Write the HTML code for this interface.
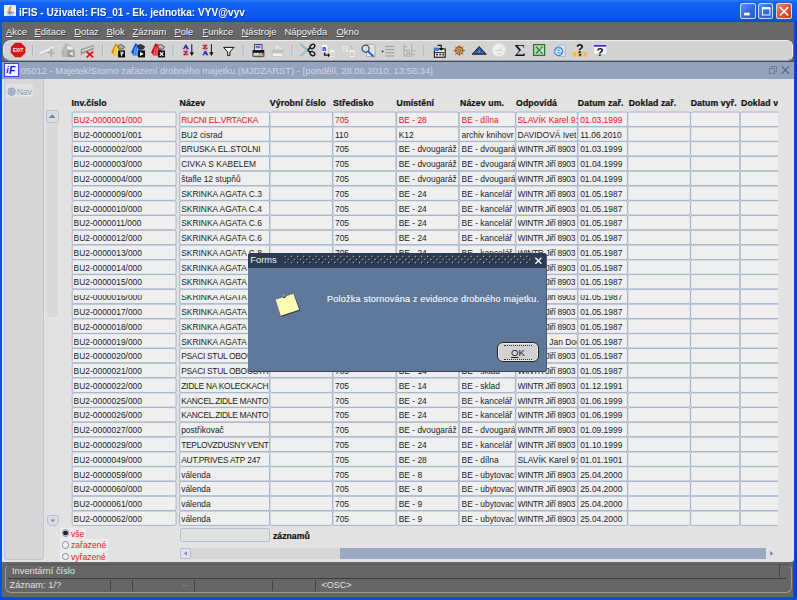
<!DOCTYPE html>
<html lang="cs">
<head>
<meta charset="utf-8">
<title>iFIS</title>
<style>
*{box-sizing:border-box;margin:0;padding:0}
html,body{width:797px;height:600px;overflow:hidden;background:#0a50d8;font-family:"Liberation Sans",sans-serif}
#app{position:absolute;left:0;top:0;width:797px;height:600px;overflow:hidden;background:#0a4fd6}
.abs{position:absolute}
/* XP title bar */
#tbar{left:0;top:0;width:797px;height:21.6px;background:linear-gradient(to bottom,#2f7cf6 0,#1263f2 2.5px,#0f5ef0 9px,#0d5aec 15px,#0c54e2 19px,#0a4cd4 21.6px)}
#ttext{left:19.4px;top:4.9px;color:#fff;font-weight:bold;font-size:11.7px;white-space:nowrap;text-shadow:0.7px 0.7px 0 #123a8a;transform:scaleX(0.864);transform-origin:0 0}
#ticon{left:4px;top:4.7px;width:12px;height:11.8px;background:#ededeb;border-radius:0.6px}
.wb{top:3.4px;width:15.3px;height:15.6px;border:0.8px solid rgba(240,244,255,.8);border-radius:2.5px;background:linear-gradient(135deg,#5f92f6,#3368e2 55%,#2a5cd6)}
#wclose{background:linear-gradient(135deg,#f08c6c,#de5432 50%,#c8401e)}
/* menu */
#menu{left:2px;top:21.5px;width:791.5px;height:19.5px;background:#676767}
.mi{top:25.8px;color:#f4f4f4;font-size:9.4px;white-space:nowrap;text-shadow:0.6px 0.6px 0 #333}
.mi u{text-decoration:underline;text-underline-offset:1px}
/* toolbar */
#tool{left:2px;top:40.4px;width:792px;height:21px;background:#676767}
#toolin{left:0.6px;top:0;width:790.6px;height:20.4px;background:#d3d3d3;border-radius:8px 6px 6px 8px;border:0.7px solid #ececec;border-bottom:0.8px solid #a4a4a4}
/* mdi window */
#mdit{left:2px;top:61px;width:791.5px;height:18px;background:#93a2bd;border-top:0.8px solid #3e4a66}
#mditext{left:20.8px;top:65.4px;color:#cfd6e4;font-size:9.42px;white-space:nowrap}
#mdiicon{left:4.3px;top:62.8px;width:14.3px;height:14.2px;background:#f4f4f8;border:1.1px solid #3c3cf0;font-size:9.6px;font-weight:bold;font-style:italic;color:#1212e0;line-height:11.6px;letter-spacing:-1.4px;padding-left:1.4px;overflow:hidden;font-family:'Liberation Sans',sans-serif}
#content{left:2px;top:78.5px;width:791.5px;height:483.5px;background:#e2e2e2;border-radius:0 0 3px 0}
#side{left:4.2px;top:78.5px;width:39.6px;height:481px;background:#d6d6d6;border:0.8px solid #c2c8d2;border-top:none;border-radius:0 0 3px 3px}
#navtab{left:6px;top:84.4px;width:27px;height:13.6px;background:#e0e0e0}
#navtxt{left:17px;top:86.5px;font-size:8.4px;color:#8a9ab4;text-shadow:0.6px 0.6px 0 #f4f4f4}
.h{position:absolute;top:98px;font-size:8.7px;font-weight:bold;color:#111;-webkit-text-stroke:0.22px #111;white-space:nowrap;letter-spacing:0.12px}
#grid{left:0;top:0;width:777.5px;height:600px;overflow:hidden}
.r{position:absolute;left:0;height:14.7px;width:800px}
.c{position:absolute;top:0;height:14.7px;font-size:8.43px;line-height:17.8px;white-space:nowrap;overflow:hidden;color:#1c1c1c}
.red .c{color:#f00c16}
.g{position:absolute;left:0;right:0;top:4.2px;height:1.5px;background:#efefef}
/* scroll */
#vtrack{left:47.2px;top:123px;width:10.4px;height:193.5px;background:#d9d9d9}
.sbtn{width:11.5px;height:11.5px;border:0.8px solid #b4c0d4;border-radius:2.5px;background:#dadce1}
/* bottom widgets */
.rlab{position:absolute;left:60px;font-size:8.6px;color:#f0141e;background:#ececec;height:11.6px;line-height:12.4px;padding:0 1.5px 0 11px;white-space:nowrap}
.rad{position:absolute;z-index:2;left:61.5px;width:7.5px;height:7.5px;border-radius:50%;border:0.8px solid #7a8aa6;background:#f4f4f4}
#cnt{left:179.7px;top:528.2px;width:90px;height:14px;border:0.9px solid #b2bfd2;border-radius:2.2px;background:#e0e0e0}
#zaz{left:273px;top:531px;font-size:8.7px;font-weight:bold;color:#111;-webkit-text-stroke:0.22px #111}
#hs{left:179.5px;top:547.8px;width:598px;height:10.9px;background:#d6d6d6}
#hsthumb{left:339.5px;top:547.8px;width:427px;height:10.9px;background:#9aa8c1}
/* status */
#status{left:2px;top:562px;width:791px;height:35px;background:#666}
#stin{left:5px;top:563.5px;width:787px;height:29px;border:0.8px solid #9a9a9a;border-radius:6px;border-top-color:#555}
#stline{left:8px;top:577.5px;width:778px;height:0.9px;background:#3c3c3c}
.st{position:absolute;color:#e2e2e2;font-size:9.3px;white-space:nowrap}
.ss{position:absolute;top:579.5px;width:1.2px;height:11px;background:#7a869c;border-left:0.5px solid #444}
/* dialog */
#dlg{left:248.3px;top:252.5px;width:298.7px;height:119.2px;background:#5f7799;border-radius:2.5px;border-bottom:1px solid #36435c;border-right:0.7px solid #465a78;overflow:hidden}
#dlgt{left:0;top:0;width:300px;height:15px;background:#2d3a52}
#dlgdots{left:34px;top:2px;width:249px;height:11px;background-image:radial-gradient(circle at 1px 1px,#6c7a94 0.65px,transparent 0.95px),radial-gradient(circle at 1px 1px,#6c7a94 0.65px,transparent 0.95px);background-size:3.9px 3.9px,3.9px 3.9px;background-position:0 0,1.95px 1.95px;opacity:.9}
#dlgname{left:2px;top:2.9px;color:#f2f4f8;font-size:9.3px}
#dlgmsg{left:78.8px;top:41.5px;color:#e2e7f0;text-shadow:0 0 0.5px #dfe5ee;font-size:9.1px;white-space:nowrap;letter-spacing:0.18px}
#ok{left:248.9px;top:89.8px;width:41.6px;height:20.2px;background:#d2d2d2;border:1px solid #262626;border-radius:6px;box-shadow:inset 0 0 0 0.8px #f2f2f2}
#oktxt{left:0;top:3.7px;width:39.6px;text-align:center;font-size:9.6px;color:#222}
.okd{left:5.5px;width:28px;height:0;border-top:0.8px dotted #333}
</style>
</head>
<body>
<div id="app">
<div id="tbar" class="abs"></div>
<div id="ticon" class="abs"></div>
<svg class="abs" style="left:4px;top:4.7px" width="12" height="12" viewBox="0 0 12 12"><path d="M6.8 1.8C4.6 3.4 7.8 4 5.2 6" stroke="#e8762a" stroke-width="1.5" fill="none" stroke-linecap="round"/><path d="M5 2.6C4 3.8 5.6 4.4 4.4 5.6" stroke="#f0a060" stroke-width="0.9" fill="none"/><path d="M3.2 6.6h5.6c0 1.8-1 2.8-2.8 2.8s-2.8-1-2.8-2.8z" fill="#7a92b4"/><path d="M8.8 7c1.6 0 1.4 1.8-0.2 1.8" stroke="#5a7298" stroke-width="0.6" fill="none"/><path d="M2.8 10.2h6.6" stroke="#9aa8bc" stroke-width="0.7"/></svg>
<div id="ttext" class="abs">iFIS - Uživatel: FIS_01 - Ek. jednotka: VYV@vyv</div>
<div id="wmin" class="abs wb" style="left:740.3px"></div>
<div id="wmax" class="abs wb" style="left:758.2px"></div>
<div id="wclose" class="abs wb" style="left:776.3px"></div>
<svg class="abs" style="left:740px;top:0" width="54" height="22" viewBox="740 0 54 22">
 <rect x="743.9" y="12.7" width="5.8" height="2.7" fill="#fff"/>
 <rect x="762.5" y="8" width="7.4" height="7" fill="none" stroke="#fff" stroke-width="1"/><rect x="762" y="7.2" width="8.4" height="2.1" fill="#fff"/>
 <path d="M780.4 7.6 L787.7 15 M787.7 7.6 L780.4 15" stroke="#fff" stroke-width="1.6" stroke-linecap="round"/>
</svg>

<div id="menu" class="abs"></div>
<div class="abs mi" style="left:6px"><u>A</u>kce</div>
<div class="abs mi" style="left:34.5px"><u>E</u>ditace</div>
<div class="abs mi" style="left:74.3px"><u>D</u>otaz</div>
<div class="abs mi" style="left:106.5px"><u>B</u>lok</div>
<div class="abs mi" style="left:132.5px"><u>Z</u>áznam</div>
<div class="abs mi" style="left:174.5px"><u>P</u>ole</div>
<div class="abs mi" style="left:202.5px"><u>F</u>unkce</div>
<div class="abs mi" style="left:241.5px"><u>N</u>ástroje</div>
<div class="abs mi" style="left:284.5px">Náp<u>o</u>věda</div>
<div class="abs mi" style="left:336.5px"><u>O</u>kno</div>

<div id="tool" class="abs"><div id="toolin" class="abs"></div></div>
<svg class="abs" style="left:0;top:40px" width="797" height="22" viewBox="0 40 797 22" font-family="Liberation Sans, sans-serif">
 <!-- separators -->
 <g stroke="#9aaac6" stroke-width="1.1">
  <path d="M32.8 45V55M102.8 45V55M173.2 45V55M243.3 45V55M292.2 45V55M424 45V55"/>
 </g>
 <g stroke="#eef1f6" stroke-width="0.6">
  <path d="M33.6 45V55M103.6 45V55M174 45V55M244.1 45V55M293 45V55M424.8 45V55"/>
 </g>
 <!-- 1 exit -->
 <polygon points="15.2,43.1 21,43.1 25.1,47.1 25.1,52.9 21,56.9 15.2,56.9 11.1,52.9 11.1,47.1" fill="#d9141f" stroke="#c00c18" stroke-width="0.5"/>
 <text x="18.1" y="51.8" font-size="4.9" font-weight="bold" fill="#fff" text-anchor="middle" textLength="10.4" lengthAdjust="spacingAndGlyphs">EXIT</text>
 <!-- 2 insert record (disabled) -->
 <g>
  <polygon points="40,52.6 53.4,46 53.4,49 40,54.4" fill="#f0f0f0"/>
  <polygon points="40,54.4 53.4,49 53.4,50 40,55.3" fill="#b9b9b9"/>
  <path d="M51.2 48.6V57M47.8 52.8H54.6" stroke="#b2b2b2" stroke-width="1.7"/>
 </g>
 <!-- 3 disabled house/doc -->
 <g>
  <polygon points="66,43 73,47.4 74.4,50 74.4,57 62.6,57 61.2,52.5 63.5,46.5" fill="#b7b7b7"/>
  <polygon points="67.3,45.8 72.8,47.6 72.8,49.6 67.3,49.6" fill="#eeeeee"/>
  <rect x="67.6" y="50.2" width="7" height="6.9" fill="#9a9a9a"/>
  <polygon points="72.8,51.5 72.8,55.8 69.2,53.6" fill="#f2f2f2"/>
 </g>
 <!-- 4 delete record -->
 <g>
  <polygon points="81,49 93.9,44.8 93.9,49.4 81,54.6" fill="#9c9c9c"/>
  <polygon points="81.6,50.4 93.3,46.4 93.3,47.6 81.6,51.8" fill="#ececec"/>
  <path d="M81.3 49V55.2" stroke="#8a8a8a" stroke-width="0.8"/>
  <path d="M86.6 51.6L93.2 57.4M93.2 51.6L86.6 57.4" stroke="#e8101c" stroke-width="1.9"/>
 </g>
 <!-- 5-7 folders -->
 <g>
  <polygon points="111.2,52.6 115.4,43.6 118.6,44.6 121.2,47.6 121.0,55.8 113.4,55.4" fill="#f4c22e"/>
  <polygon points="111.2,52.6 115.4,43.6 116.8,44 113.2,53.4" fill="#d88a10"/>
  <path d="M115.4 47.2L114.2 54.4M117.6 48.4L116.6 55" stroke="#fbe27a" stroke-width="0.9"/>
  <polygon points="117.6,46 120.6,44.4 124.6,46.6 123.4,49 119.4,49" fill="#a8a8a8" stroke="#4a4a4a" stroke-width="0.8"/>
  <rect x="118.1" y="50.4" width="6.9" height="7" fill="#0c0c0c"/>
  <path d="M120.2 52.2h2.8v1.7h-2.6M121.6 53.6v2.6" stroke="#fff" stroke-width="1" fill="none"/>
 </g>
 <g>
  <polygon points="131.2,52.6 135.4,43.6 138.6,44.6 141.2,47.6 141.0,55.8 133.4,55.4" fill="#2c7ef4"/>
  <polygon points="131.2,52.6 135.4,43.6 136.8,44 133.2,53.4" fill="#1244cc"/>
  <path d="M135.4 47.2L134.2 54.4M137.6 48.4L136.6 55" stroke="#7ab8ff" stroke-width="0.9"/>
  <polygon points="137.6,46 140.6,44.4 144.6,46.6 143.4,49 139.4,49" fill="#3a3a3a" stroke="#111" stroke-width="0.8"/>
  <rect x="138.1" y="50.4" width="6.9" height="7" fill="#0c0c0c"/>
  <polygon points="140.0,51.8 143.8,53.9 140.0,56" fill="#fff"/>
 </g>
 <g>
  <polygon points="151.2,52.6 155.4,43.6 158.6,44.6 161.2,47.6 161.0,55.8 153.4,55.4" fill="#ec2630"/>
  <polygon points="151.2,52.6 155.4,43.6 156.8,44 153.2,53.4" fill="#b80c18"/>
  <path d="M155.4 47.2L154.2 54.4M157.6 48.4L156.6 55" stroke="#ff8088" stroke-width="0.9"/>
  <polygon points="157.6,46 160.6,44.4 164.6,46.6 163.4,49 159.4,49" fill="#b4b4b4" stroke="#4a4a4a" stroke-width="0.8"/>
  <rect x="158.1" y="50.4" width="6.9" height="7" fill="#0c0c0c"/>
  <path d="M159.8 52.2L163.4 55.8M163.4 52.2L159.8 55.8" stroke="#fff" stroke-width="1.2"/>
 </g>
 <!-- 8 sort AZ -->
 <g font-weight="bold" font-size="6.4" font-family="Liberation Serif, serif" stroke-width="0.35">
  <text x="183" y="49" fill="#1a1cb0" stroke="#1a1cb0" textLength="5.6" lengthAdjust="spacingAndGlyphs">A</text>
  <text x="183.2" y="55.4" fill="#b8141e" stroke="#b8141e" textLength="5.2" lengthAdjust="spacingAndGlyphs">Z</text>
  <path d="M191.8 44.2V54" stroke="#111" stroke-width="1"/>
  <polygon points="189.6,52.2 194,52.2 191.8,56" fill="#111" stroke="none"/>
 </g>
 <!-- 9 sort ZA -->
 <g font-weight="bold" font-size="6.4" font-family="Liberation Serif, serif" stroke-width="0.35">
  <text x="202.6" y="49" fill="#b8141e" stroke="#b8141e" textLength="5.2" lengthAdjust="spacingAndGlyphs">Z</text>
  <text x="202.4" y="55.4" fill="#1a1cb0" stroke="#1a1cb0" textLength="5.6" lengthAdjust="spacingAndGlyphs">A</text>
  <path d="M211.4 44.2V54" stroke="#111" stroke-width="1"/>
  <polygon points="209.2,52.2 213.6,52.2 211.4,56" fill="#111" stroke="none"/>
 </g>
 <!-- 10 funnel -->
 <polygon points="223.6,47.4 234,47.4 229.9,52 229.9,55.6 227.7,55.6 227.7,52" fill="#f4f4f4" stroke="#111" stroke-width="1"/>
 <!-- 11 printer -->
 <g>
  <rect x="254.4" y="44.6" width="7.6" height="5.8" fill="#f4f6fc" stroke="#222" stroke-width="0.8"/>
  <path d="M255.6 46.2h5M255.6 47.8h5" stroke="#2a3ad0" stroke-width="1"/>
  <rect x="252.6" y="50" width="11.6" height="2.6" fill="#1a1a1a"/>
  <rect x="252.9" y="52.4" width="11" height="3.8" fill="#dcdcdc" stroke="#1a1a1a" stroke-width="0.8"/>
  <rect x="258.8" y="53.2" width="1.6" height="1.5" fill="#20b030"/>
  <rect x="260.4" y="53.2" width="1.4" height="1.5" fill="#f0c020"/>
  <rect x="261.8" y="53.2" width="1.5" height="1.5" fill="#e02020"/>
  <path d="M254 56.8h9" stroke="#555" stroke-width="0.7"/>
 </g>
 <!-- 12 disabled fax/printer -->
 <g>
  <polygon points="274,49 276.5,44.6 282.4,45.4 282.4,50" fill="#eeeeee" stroke="#c0c0c0" stroke-width="0.6"/>
  <path d="M276.6 47.8l4.4-2.2M277.6 49l4.4-2.2" stroke="#c4c4c4" stroke-width="0.7"/>
  <rect x="271.8" y="49.6" width="11.4" height="3.6" fill="#c2c2c2"/>
  <rect x="272.2" y="53" width="10.6" height="3.4" fill="#efefef" stroke="#bdbdbd" stroke-width="0.6"/>
 </g>
 <!-- 13 scissors -->
 <g>
  <path d="M300.6 43.8L310.2 52.6" stroke="#5aa0a8" stroke-width="1.7"/>
  <path d="M300.6 56L310.2 47.4" stroke="#6cb0b6" stroke-width="1.7"/>
  <path d="M300.9 43.9L308 50.4M300.9 55.9L308 49.4" stroke="#e8f4f4" stroke-width="0.6"/>
  <ellipse cx="312.4" cy="46.4" rx="2.6" ry="1.9" fill="none" stroke="#111" stroke-width="1.3" transform="rotate(-35 312.4 46.4)"/>
  <ellipse cx="312.4" cy="53.6" rx="2.6" ry="1.9" fill="none" stroke="#111" stroke-width="1.3" transform="rotate(35 312.4 53.6)"/>
  <path d="M307.6 50L310.6 47.6M307.6 50L310.6 52.4" stroke="#111" stroke-width="1.3"/>
 </g>
 <!-- 14 copy -->
 <g>
  <polygon points="321.4,44 326,44 328,46 328,52.8 321.4,52.8" fill="#f8f8ff" stroke="#b8b8c8" stroke-width="0.6"/>
  <text x="322" y="51.4" font-size="7.6" font-weight="bold" fill="#2030e0">a</text>
  <path d="M324.6 52.6V55.2H328.6" stroke="#111" stroke-width="1.3" fill="none"/>
  <polygon points="328,53.2 330.6,55.2 328,57.2" fill="#111"/>
  <rect x="329.8" y="49.8" width="4.6" height="7" fill="#f2f2f2"/>
  <text x="330.2" y="56.4" font-size="6.6" fill="#c8c8c8" font-weight="bold">a</text>
 </g>
 <!-- 15 paste disabled -->
 <g>
  <rect x="342" y="45.4" width="6.4" height="6.8" fill="#f0f0f0" stroke="#c4c4c4" stroke-width="0.6"/>
  <path d="M343.2 47.4h4M343.2 49h4M343.2 50.6h3" stroke="#bcbcbc" stroke-width="0.7"/>
  <path d="M349.4 46.4h2.6v3" stroke="#b4b4b4" stroke-width="1" fill="none"/>
  <rect x="349.6" y="50" width="5" height="7" fill="#efefef"/>
  <text x="350" y="56.4" font-size="6.6" fill="#c2c2c2" font-weight="bold">a</text>
 </g>
 <!-- 16 magnifier -->
 <g>
  <polygon points="366.6,44.4 373,44.4 375,46.4 375,56.6 366.6,56.6" fill="#ececec" stroke="#9a9a9a" stroke-width="0.7"/>
  <path d="M369 47h4.6M369 49h4.6M369 51h4.6" stroke="#c8c8c8" stroke-width="0.6"/>
  <circle cx="365.6" cy="48.6" r="3.5" fill="#cfe4f4" fill-opacity="0.8" stroke="#444a58" stroke-width="1.3"/>
  <path d="M368 51.2L373.6 56.6" stroke="#1a62e0" stroke-width="2"/>
 </g>
 <!-- 17 list -->
 <g>
  <polygon points="381.8,50.2 384,51.4 381.8,52.6" fill="#222"/>
  <path d="M385.4 46.4h8.8M385.4 49.6h8.8M385.4 52.8h8.8M385.4 56h8.8" stroke="#959595" stroke-width="0.95"/>
 </g>
 <!-- 18 tree disabled -->
 <g stroke="#a6a6a6" stroke-width="0.85" fill="none">
  <path d="M404 44V57M411.6 44V57"/>
  <path d="M404 46.6h3.4M404 50.4h3M407 50.4h2.6v3h-2.6zM404 55h3M407 53.6h2.6v3h-2.6zM411.6 50.8h3.6M411.6 54.6h3.6"/>
 </g>
 <!-- 19 calendar/table with arrow -->
 <g>
  <rect x="434.4" y="49" width="10.8" height="8.2" fill="#f4f4f6" stroke="#111" stroke-width="1.1"/>
  <rect x="434" y="47.6" width="4.6" height="3.4" fill="#3a78e8"/>
  <path d="M435 52.6h9.6" stroke="#111" stroke-width="0.9"/>
  <rect x="436" y="53.8" width="2" height="1.6" fill="#222"/><rect x="439.2" y="53.8" width="2" height="1.6" fill="#222"/><rect x="442.2" y="53.8" width="1.8" height="1.6" fill="#222"/>
  <path d="M437.6 45.4h3.6v3" stroke="#111" stroke-width="1.1" fill="none"/>
  <polygon points="439,48 443.4,48 441.2,51" fill="#111"/>
 </g>
 <!-- 20 ship wheel -->
 <g stroke="#a85e10" fill="none">
  <circle cx="459.2" cy="50.6" r="3.6" stroke-width="1.3"/>
  <path d="M453.4 50.6H465M459.2 45V56.2M455.2 46.6L463.2 54.6M463.2 46.6L455.2 54.6" stroke-width="1"/>
  <circle cx="459.2" cy="50.6" r="1.1" fill="#e8b060" stroke-width="0.6"/>
 </g>
 <!-- 21 eye triangle -->
 <g>
  <path d="M474.4 47.6L472.8 46.2M484.2 47.6L485.8 46.2M476.6 46L475.8 44.8M482 46L482.8 44.8" stroke="#e8c820" stroke-width="0.9"/>
  <polygon points="479.2,46.6 486.2,54.2 472.2,54.2" fill="#5a5a5a" stroke="#1a1a1a" stroke-width="1"/>
  <circle cx="479.3" cy="51.4" r="2.5" fill="#0c54fa"/>
  <circle cx="479.3" cy="51.6" r="1" fill="#5cc0ff"/>
 </g>
 <!-- 22 clock disabled -->
 <g>
  <circle cx="499" cy="50" r="6.4" fill="#f0f0f0" stroke="#e2e2e2" stroke-width="0.6"/>
  <path d="M499 50L503 46.2M495 50.6H503M497 53.8h4" stroke="#c8c8c8" stroke-width="0.8"/>
 </g>
 <!-- 23 sigma -->
 <text x="514.3" y="56" font-size="16.4" font-family="Liberation Serif, serif" fill="#111" textLength="11.4" lengthAdjust="spacingAndGlyphs">Σ</text>
 <!-- 24 excel -->
 <g>
  <rect x="533.6" y="44.6" width="11" height="10.8" fill="#c6d2c6" stroke="#2a7a2e" stroke-width="1.3"/>
  <path d="M536 46.8L542.4 53.4M542.4 46.8L536 53.4" stroke="#1e8a2a" stroke-width="1.5"/>
  <path d="M539.4 49h4.4M539.4 51.4h4.4" stroke="#e8f0e8" stroke-width="0.6"/>
 </g>
 <!-- 25 ie + doc -->
 <g>
  <polygon points="558.6,44.6 563.6,44.6 565.4,46.4 565.4,56.4 558.6,56.4" fill="#e4e8f4" stroke="#98a8cc" stroke-width="0.7"/>
  <circle cx="558.6" cy="51.4" r="4.3" fill="#5aa0ec" stroke="#2a68c8" stroke-width="0.8"/>
  <path d="M556 51.6h5.4a2.7 2.7 0 1 0 -0.7 1.9" stroke="#e8f2ff" stroke-width="1.1" fill="none"/>
  <path d="M553.6 54.2C555 49 560 45.4 564 46" stroke="#9ccaf8" stroke-width="0.8" fill="none"/>
 </g>
 <!-- 26 help users -->
 <g>
  <rect x="572.8" y="51.6" width="3.6" height="5" fill="#f2b860"/><rect x="573.4" y="50.4" width="2.2" height="1.6" fill="#f8d8a0"/>
  <rect x="577.8" y="51.6" width="4.4" height="5" fill="#f0a848"/>
  <rect x="583.4" y="51.6" width="3.6" height="5" fill="#f2b860"/><rect x="584" y="50.4" width="2.2" height="1.6" fill="#f8d8a0"/>
  <text x="576" y="53" font-size="12.4" font-weight="bold" fill="#111">?</text>
  <rect x="579.2" y="54" width="1.7" height="1.7" fill="#111"/>
 </g>
 <!-- 27 window help -->
 <g>
  <rect x="594" y="45.4" width="12.2" height="8.6" fill="#f6f6f6" stroke="#d8d8d8" stroke-width="0.5"/>
  <rect x="594" y="45" width="12.2" height="1.7" fill="#4a24d8"/>
  <text x="596.6" y="56.4" font-size="11.6" font-weight="bold" fill="#111">?</text>
 </g>
</svg>


<div id="mdit" class="abs"></div>
<div id="mdiicon" class="abs"></div>
<svg class="abs" style="left:4.3px;top:62.8px" width="15" height="15" viewBox="0 0 15 15" font-family="Liberation Sans, sans-serif" font-weight="bold" font-style="italic" fill="#1414e2"><text x="2.3" y="10" font-size="9">i</text><text x="4.9" y="11.3" font-size="10.4">F</text></svg>
<div id="mditext" class="abs">05012 - Majetek/Storno zařazení drobného majetku (MJDZARST) - [pondělí, 28.06.2010, 13:58:34]</div>
<svg class="abs" style="left:768px;top:64px" width="24" height="12" viewBox="0 0 24 12">
 <rect x="3.2" y="2.6" width="5.4" height="4.6" fill="none" stroke="#6c7a94" stroke-width="0.9"/>
 <rect x="1.2" y="4.8" width="5.4" height="4.6" fill="#93a2bd" stroke="#6c7a94" stroke-width="0.9"/>
 <path d="M13.8 2.4 L21 9.8 M21 2.4 L13.8 9.8" stroke="#5d6b86" stroke-width="1.3"/>
</svg>

<div id="content" class="abs"></div>
<div id="side" class="abs"></div>
<div id="navtab" class="abs"></div>
<svg class="abs" style="left:7px;top:87px" width="10" height="10" viewBox="0 0 10 10"><circle cx="4.6" cy="4.6" r="3.7" fill="#b8c2d4" stroke="#8d9db8" stroke-width="0.8"/><path d="M1 4.6H8.2M4.6 1V8.2M2 2L7.2 7.2M7.2 2L2 7.2" stroke="#8d9db8" stroke-width="0.5"/></svg>
<div id="navtxt" class="abs">Nav</div>

<div id="grid" class="abs">
<div class="h" style="left:71.5px">Inv.číslo</div>
<div class="h" style="left:179.5px">Název</div>
<div class="h" style="left:269.8px">Výrobní číslo</div>
<div class="h" style="left:333px">Středisko</div>
<div class="h" style="left:396.5px">Umístění</div>
<div class="h" style="left:460px">Název um.</div>
<div class="h" style="left:516px">Odpovídá</div>
<div class="h" style="left:577.8px">Datum zař.</div>
<div class="h" style="left:628.7px">Doklad zař.</div>
<div class="h" style="left:690.7px">Datum vyř.</div>
<div class="h" style="left:741px">Doklad vyř.</div>
<svg class="abs" style="left:0;top:0" width="778" height="540" viewBox="0 0 778 540"><g fill="#efefef" stroke="#9fb1ca" stroke-width="0.95" rx="1.7"><rect x="72.15" y="112.05" width="103.90" height="14.47" rx="1.7"/><rect x="179.65" y="112.05" width="89.95" height="14.47" rx="1.7"/><rect x="269.90" y="112.05" width="62.70" height="14.47" rx="1.7"/><rect x="332.90" y="112.05" width="63.20" height="14.47" rx="1.7"/><rect x="396.40" y="112.05" width="62.45" height="14.47" rx="1.7"/><rect x="459.15" y="112.05" width="56.30" height="14.47" rx="1.7"/><rect x="515.75" y="112.05" width="61.85" height="14.47" rx="1.7"/><rect x="577.90" y="112.05" width="49.55" height="14.47" rx="1.7"/><rect x="627.75" y="112.05" width="62.60" height="14.47" rx="1.7"/><rect x="690.65" y="112.05" width="49.20" height="14.47" rx="1.7"/><rect x="740.15" y="112.05" width="51.70" height="14.47" rx="1.7"/><rect x="72.15" y="126.83" width="103.90" height="14.47" rx="1.7"/><rect x="179.65" y="126.83" width="89.95" height="14.47" rx="1.7"/><rect x="269.90" y="126.83" width="62.70" height="14.47" rx="1.7"/><rect x="332.90" y="126.83" width="63.20" height="14.47" rx="1.7"/><rect x="396.40" y="126.83" width="62.45" height="14.47" rx="1.7"/><rect x="459.15" y="126.83" width="56.30" height="14.47" rx="1.7"/><rect x="515.75" y="126.83" width="61.85" height="14.47" rx="1.7"/><rect x="577.90" y="126.83" width="49.55" height="14.47" rx="1.7"/><rect x="627.75" y="126.83" width="62.60" height="14.47" rx="1.7"/><rect x="690.65" y="126.83" width="49.20" height="14.47" rx="1.7"/><rect x="740.15" y="126.83" width="51.70" height="14.47" rx="1.7"/><rect x="72.15" y="141.60" width="103.90" height="14.47" rx="1.7"/><rect x="179.65" y="141.60" width="89.95" height="14.47" rx="1.7"/><rect x="269.90" y="141.60" width="62.70" height="14.47" rx="1.7"/><rect x="332.90" y="141.60" width="63.20" height="14.47" rx="1.7"/><rect x="396.40" y="141.60" width="62.45" height="14.47" rx="1.7"/><rect x="459.15" y="141.60" width="56.30" height="14.47" rx="1.7"/><rect x="515.75" y="141.60" width="61.85" height="14.47" rx="1.7"/><rect x="577.90" y="141.60" width="49.55" height="14.47" rx="1.7"/><rect x="627.75" y="141.60" width="62.60" height="14.47" rx="1.7"/><rect x="690.65" y="141.60" width="49.20" height="14.47" rx="1.7"/><rect x="740.15" y="141.60" width="51.70" height="14.47" rx="1.7"/><rect x="72.15" y="156.38" width="103.90" height="14.47" rx="1.7"/><rect x="179.65" y="156.38" width="89.95" height="14.47" rx="1.7"/><rect x="269.90" y="156.38" width="62.70" height="14.47" rx="1.7"/><rect x="332.90" y="156.38" width="63.20" height="14.47" rx="1.7"/><rect x="396.40" y="156.38" width="62.45" height="14.47" rx="1.7"/><rect x="459.15" y="156.38" width="56.30" height="14.47" rx="1.7"/><rect x="515.75" y="156.38" width="61.85" height="14.47" rx="1.7"/><rect x="577.90" y="156.38" width="49.55" height="14.47" rx="1.7"/><rect x="627.75" y="156.38" width="62.60" height="14.47" rx="1.7"/><rect x="690.65" y="156.38" width="49.20" height="14.47" rx="1.7"/><rect x="740.15" y="156.38" width="51.70" height="14.47" rx="1.7"/><rect x="72.15" y="171.15" width="103.90" height="14.47" rx="1.7"/><rect x="179.65" y="171.15" width="89.95" height="14.47" rx="1.7"/><rect x="269.90" y="171.15" width="62.70" height="14.47" rx="1.7"/><rect x="332.90" y="171.15" width="63.20" height="14.47" rx="1.7"/><rect x="396.40" y="171.15" width="62.45" height="14.47" rx="1.7"/><rect x="459.15" y="171.15" width="56.30" height="14.47" rx="1.7"/><rect x="515.75" y="171.15" width="61.85" height="14.47" rx="1.7"/><rect x="577.90" y="171.15" width="49.55" height="14.47" rx="1.7"/><rect x="627.75" y="171.15" width="62.60" height="14.47" rx="1.7"/><rect x="690.65" y="171.15" width="49.20" height="14.47" rx="1.7"/><rect x="740.15" y="171.15" width="51.70" height="14.47" rx="1.7"/><rect x="72.15" y="185.93" width="103.90" height="14.47" rx="1.7"/><rect x="179.65" y="185.93" width="89.95" height="14.47" rx="1.7"/><rect x="269.90" y="185.93" width="62.70" height="14.47" rx="1.7"/><rect x="332.90" y="185.93" width="63.20" height="14.47" rx="1.7"/><rect x="396.40" y="185.93" width="62.45" height="14.47" rx="1.7"/><rect x="459.15" y="185.93" width="56.30" height="14.47" rx="1.7"/><rect x="515.75" y="185.93" width="61.85" height="14.47" rx="1.7"/><rect x="577.90" y="185.93" width="49.55" height="14.47" rx="1.7"/><rect x="627.75" y="185.93" width="62.60" height="14.47" rx="1.7"/><rect x="690.65" y="185.93" width="49.20" height="14.47" rx="1.7"/><rect x="740.15" y="185.93" width="51.70" height="14.47" rx="1.7"/><rect x="72.15" y="200.70" width="103.90" height="14.47" rx="1.7"/><rect x="179.65" y="200.70" width="89.95" height="14.47" rx="1.7"/><rect x="269.90" y="200.70" width="62.70" height="14.47" rx="1.7"/><rect x="332.90" y="200.70" width="63.20" height="14.47" rx="1.7"/><rect x="396.40" y="200.70" width="62.45" height="14.47" rx="1.7"/><rect x="459.15" y="200.70" width="56.30" height="14.47" rx="1.7"/><rect x="515.75" y="200.70" width="61.85" height="14.47" rx="1.7"/><rect x="577.90" y="200.70" width="49.55" height="14.47" rx="1.7"/><rect x="627.75" y="200.70" width="62.60" height="14.47" rx="1.7"/><rect x="690.65" y="200.70" width="49.20" height="14.47" rx="1.7"/><rect x="740.15" y="200.70" width="51.70" height="14.47" rx="1.7"/><rect x="72.15" y="215.47" width="103.90" height="14.47" rx="1.7"/><rect x="179.65" y="215.47" width="89.95" height="14.47" rx="1.7"/><rect x="269.90" y="215.47" width="62.70" height="14.47" rx="1.7"/><rect x="332.90" y="215.47" width="63.20" height="14.47" rx="1.7"/><rect x="396.40" y="215.47" width="62.45" height="14.47" rx="1.7"/><rect x="459.15" y="215.47" width="56.30" height="14.47" rx="1.7"/><rect x="515.75" y="215.47" width="61.85" height="14.47" rx="1.7"/><rect x="577.90" y="215.47" width="49.55" height="14.47" rx="1.7"/><rect x="627.75" y="215.47" width="62.60" height="14.47" rx="1.7"/><rect x="690.65" y="215.47" width="49.20" height="14.47" rx="1.7"/><rect x="740.15" y="215.47" width="51.70" height="14.47" rx="1.7"/><rect x="72.15" y="230.25" width="103.90" height="14.47" rx="1.7"/><rect x="179.65" y="230.25" width="89.95" height="14.47" rx="1.7"/><rect x="269.90" y="230.25" width="62.70" height="14.47" rx="1.7"/><rect x="332.90" y="230.25" width="63.20" height="14.47" rx="1.7"/><rect x="396.40" y="230.25" width="62.45" height="14.47" rx="1.7"/><rect x="459.15" y="230.25" width="56.30" height="14.47" rx="1.7"/><rect x="515.75" y="230.25" width="61.85" height="14.47" rx="1.7"/><rect x="577.90" y="230.25" width="49.55" height="14.47" rx="1.7"/><rect x="627.75" y="230.25" width="62.60" height="14.47" rx="1.7"/><rect x="690.65" y="230.25" width="49.20" height="14.47" rx="1.7"/><rect x="740.15" y="230.25" width="51.70" height="14.47" rx="1.7"/><rect x="72.15" y="245.03" width="103.90" height="14.47" rx="1.7"/><rect x="179.65" y="245.03" width="89.95" height="14.47" rx="1.7"/><rect x="269.90" y="245.03" width="62.70" height="14.47" rx="1.7"/><rect x="332.90" y="245.03" width="63.20" height="14.47" rx="1.7"/><rect x="396.40" y="245.03" width="62.45" height="14.47" rx="1.7"/><rect x="459.15" y="245.03" width="56.30" height="14.47" rx="1.7"/><rect x="515.75" y="245.03" width="61.85" height="14.47" rx="1.7"/><rect x="577.90" y="245.03" width="49.55" height="14.47" rx="1.7"/><rect x="627.75" y="245.03" width="62.60" height="14.47" rx="1.7"/><rect x="690.65" y="245.03" width="49.20" height="14.47" rx="1.7"/><rect x="740.15" y="245.03" width="51.70" height="14.47" rx="1.7"/><rect x="72.15" y="259.80" width="103.90" height="14.47" rx="1.7"/><rect x="179.65" y="259.80" width="89.95" height="14.47" rx="1.7"/><rect x="269.90" y="259.80" width="62.70" height="14.47" rx="1.7"/><rect x="332.90" y="259.80" width="63.20" height="14.47" rx="1.7"/><rect x="396.40" y="259.80" width="62.45" height="14.47" rx="1.7"/><rect x="459.15" y="259.80" width="56.30" height="14.47" rx="1.7"/><rect x="515.75" y="259.80" width="61.85" height="14.47" rx="1.7"/><rect x="577.90" y="259.80" width="49.55" height="14.47" rx="1.7"/><rect x="627.75" y="259.80" width="62.60" height="14.47" rx="1.7"/><rect x="690.65" y="259.80" width="49.20" height="14.47" rx="1.7"/><rect x="740.15" y="259.80" width="51.70" height="14.47" rx="1.7"/><rect x="72.15" y="274.57" width="103.90" height="14.47" rx="1.7"/><rect x="179.65" y="274.57" width="89.95" height="14.47" rx="1.7"/><rect x="269.90" y="274.57" width="62.70" height="14.47" rx="1.7"/><rect x="332.90" y="274.57" width="63.20" height="14.47" rx="1.7"/><rect x="396.40" y="274.57" width="62.45" height="14.47" rx="1.7"/><rect x="459.15" y="274.57" width="56.30" height="14.47" rx="1.7"/><rect x="515.75" y="274.57" width="61.85" height="14.47" rx="1.7"/><rect x="577.90" y="274.57" width="49.55" height="14.47" rx="1.7"/><rect x="627.75" y="274.57" width="62.60" height="14.47" rx="1.7"/><rect x="690.65" y="274.57" width="49.20" height="14.47" rx="1.7"/><rect x="740.15" y="274.57" width="51.70" height="14.47" rx="1.7"/><rect x="72.15" y="289.35" width="103.90" height="14.47" rx="1.7"/><rect x="179.65" y="289.35" width="89.95" height="14.47" rx="1.7"/><rect x="269.90" y="289.35" width="62.70" height="14.47" rx="1.7"/><rect x="332.90" y="289.35" width="63.20" height="14.47" rx="1.7"/><rect x="396.40" y="289.35" width="62.45" height="14.47" rx="1.7"/><rect x="459.15" y="289.35" width="56.30" height="14.47" rx="1.7"/><rect x="515.75" y="289.35" width="61.85" height="14.47" rx="1.7"/><rect x="577.90" y="289.35" width="49.55" height="14.47" rx="1.7"/><rect x="627.75" y="289.35" width="62.60" height="14.47" rx="1.7"/><rect x="690.65" y="289.35" width="49.20" height="14.47" rx="1.7"/><rect x="740.15" y="289.35" width="51.70" height="14.47" rx="1.7"/><rect x="72.15" y="304.12" width="103.90" height="14.47" rx="1.7"/><rect x="179.65" y="304.12" width="89.95" height="14.47" rx="1.7"/><rect x="269.90" y="304.12" width="62.70" height="14.47" rx="1.7"/><rect x="332.90" y="304.12" width="63.20" height="14.47" rx="1.7"/><rect x="396.40" y="304.12" width="62.45" height="14.47" rx="1.7"/><rect x="459.15" y="304.12" width="56.30" height="14.47" rx="1.7"/><rect x="515.75" y="304.12" width="61.85" height="14.47" rx="1.7"/><rect x="577.90" y="304.12" width="49.55" height="14.47" rx="1.7"/><rect x="627.75" y="304.12" width="62.60" height="14.47" rx="1.7"/><rect x="690.65" y="304.12" width="49.20" height="14.47" rx="1.7"/><rect x="740.15" y="304.12" width="51.70" height="14.47" rx="1.7"/><rect x="72.15" y="318.90" width="103.90" height="14.47" rx="1.7"/><rect x="179.65" y="318.90" width="89.95" height="14.47" rx="1.7"/><rect x="269.90" y="318.90" width="62.70" height="14.47" rx="1.7"/><rect x="332.90" y="318.90" width="63.20" height="14.47" rx="1.7"/><rect x="396.40" y="318.90" width="62.45" height="14.47" rx="1.7"/><rect x="459.15" y="318.90" width="56.30" height="14.47" rx="1.7"/><rect x="515.75" y="318.90" width="61.85" height="14.47" rx="1.7"/><rect x="577.90" y="318.90" width="49.55" height="14.47" rx="1.7"/><rect x="627.75" y="318.90" width="62.60" height="14.47" rx="1.7"/><rect x="690.65" y="318.90" width="49.20" height="14.47" rx="1.7"/><rect x="740.15" y="318.90" width="51.70" height="14.47" rx="1.7"/><rect x="72.15" y="333.67" width="103.90" height="14.47" rx="1.7"/><rect x="179.65" y="333.67" width="89.95" height="14.47" rx="1.7"/><rect x="269.90" y="333.67" width="62.70" height="14.47" rx="1.7"/><rect x="332.90" y="333.67" width="63.20" height="14.47" rx="1.7"/><rect x="396.40" y="333.67" width="62.45" height="14.47" rx="1.7"/><rect x="459.15" y="333.67" width="56.30" height="14.47" rx="1.7"/><rect x="515.75" y="333.67" width="61.85" height="14.47" rx="1.7"/><rect x="577.90" y="333.67" width="49.55" height="14.47" rx="1.7"/><rect x="627.75" y="333.67" width="62.60" height="14.47" rx="1.7"/><rect x="690.65" y="333.67" width="49.20" height="14.47" rx="1.7"/><rect x="740.15" y="333.67" width="51.70" height="14.47" rx="1.7"/><rect x="72.15" y="348.45" width="103.90" height="14.47" rx="1.7"/><rect x="179.65" y="348.45" width="89.95" height="14.47" rx="1.7"/><rect x="269.90" y="348.45" width="62.70" height="14.47" rx="1.7"/><rect x="332.90" y="348.45" width="63.20" height="14.47" rx="1.7"/><rect x="396.40" y="348.45" width="62.45" height="14.47" rx="1.7"/><rect x="459.15" y="348.45" width="56.30" height="14.47" rx="1.7"/><rect x="515.75" y="348.45" width="61.85" height="14.47" rx="1.7"/><rect x="577.90" y="348.45" width="49.55" height="14.47" rx="1.7"/><rect x="627.75" y="348.45" width="62.60" height="14.47" rx="1.7"/><rect x="690.65" y="348.45" width="49.20" height="14.47" rx="1.7"/><rect x="740.15" y="348.45" width="51.70" height="14.47" rx="1.7"/><rect x="72.15" y="363.23" width="103.90" height="14.47" rx="1.7"/><rect x="179.65" y="363.23" width="89.95" height="14.47" rx="1.7"/><rect x="269.90" y="363.23" width="62.70" height="14.47" rx="1.7"/><rect x="332.90" y="363.23" width="63.20" height="14.47" rx="1.7"/><rect x="396.40" y="363.23" width="62.45" height="14.47" rx="1.7"/><rect x="459.15" y="363.23" width="56.30" height="14.47" rx="1.7"/><rect x="515.75" y="363.23" width="61.85" height="14.47" rx="1.7"/><rect x="577.90" y="363.23" width="49.55" height="14.47" rx="1.7"/><rect x="627.75" y="363.23" width="62.60" height="14.47" rx="1.7"/><rect x="690.65" y="363.23" width="49.20" height="14.47" rx="1.7"/><rect x="740.15" y="363.23" width="51.70" height="14.47" rx="1.7"/><rect x="72.15" y="378.00" width="103.90" height="14.47" rx="1.7"/><rect x="179.65" y="378.00" width="89.95" height="14.47" rx="1.7"/><rect x="269.90" y="378.00" width="62.70" height="14.47" rx="1.7"/><rect x="332.90" y="378.00" width="63.20" height="14.47" rx="1.7"/><rect x="396.40" y="378.00" width="62.45" height="14.47" rx="1.7"/><rect x="459.15" y="378.00" width="56.30" height="14.47" rx="1.7"/><rect x="515.75" y="378.00" width="61.85" height="14.47" rx="1.7"/><rect x="577.90" y="378.00" width="49.55" height="14.47" rx="1.7"/><rect x="627.75" y="378.00" width="62.60" height="14.47" rx="1.7"/><rect x="690.65" y="378.00" width="49.20" height="14.47" rx="1.7"/><rect x="740.15" y="378.00" width="51.70" height="14.47" rx="1.7"/><rect x="72.15" y="392.77" width="103.90" height="14.47" rx="1.7"/><rect x="179.65" y="392.77" width="89.95" height="14.47" rx="1.7"/><rect x="269.90" y="392.77" width="62.70" height="14.47" rx="1.7"/><rect x="332.90" y="392.77" width="63.20" height="14.47" rx="1.7"/><rect x="396.40" y="392.77" width="62.45" height="14.47" rx="1.7"/><rect x="459.15" y="392.77" width="56.30" height="14.47" rx="1.7"/><rect x="515.75" y="392.77" width="61.85" height="14.47" rx="1.7"/><rect x="577.90" y="392.77" width="49.55" height="14.47" rx="1.7"/><rect x="627.75" y="392.77" width="62.60" height="14.47" rx="1.7"/><rect x="690.65" y="392.77" width="49.20" height="14.47" rx="1.7"/><rect x="740.15" y="392.77" width="51.70" height="14.47" rx="1.7"/><rect x="72.15" y="407.55" width="103.90" height="14.47" rx="1.7"/><rect x="179.65" y="407.55" width="89.95" height="14.47" rx="1.7"/><rect x="269.90" y="407.55" width="62.70" height="14.47" rx="1.7"/><rect x="332.90" y="407.55" width="63.20" height="14.47" rx="1.7"/><rect x="396.40" y="407.55" width="62.45" height="14.47" rx="1.7"/><rect x="459.15" y="407.55" width="56.30" height="14.47" rx="1.7"/><rect x="515.75" y="407.55" width="61.85" height="14.47" rx="1.7"/><rect x="577.90" y="407.55" width="49.55" height="14.47" rx="1.7"/><rect x="627.75" y="407.55" width="62.60" height="14.47" rx="1.7"/><rect x="690.65" y="407.55" width="49.20" height="14.47" rx="1.7"/><rect x="740.15" y="407.55" width="51.70" height="14.47" rx="1.7"/><rect x="72.15" y="422.33" width="103.90" height="14.47" rx="1.7"/><rect x="179.65" y="422.33" width="89.95" height="14.47" rx="1.7"/><rect x="269.90" y="422.33" width="62.70" height="14.47" rx="1.7"/><rect x="332.90" y="422.33" width="63.20" height="14.47" rx="1.7"/><rect x="396.40" y="422.33" width="62.45" height="14.47" rx="1.7"/><rect x="459.15" y="422.33" width="56.30" height="14.47" rx="1.7"/><rect x="515.75" y="422.33" width="61.85" height="14.47" rx="1.7"/><rect x="577.90" y="422.33" width="49.55" height="14.47" rx="1.7"/><rect x="627.75" y="422.33" width="62.60" height="14.47" rx="1.7"/><rect x="690.65" y="422.33" width="49.20" height="14.47" rx="1.7"/><rect x="740.15" y="422.33" width="51.70" height="14.47" rx="1.7"/><rect x="72.15" y="437.10" width="103.90" height="14.47" rx="1.7"/><rect x="179.65" y="437.10" width="89.95" height="14.47" rx="1.7"/><rect x="269.90" y="437.10" width="62.70" height="14.47" rx="1.7"/><rect x="332.90" y="437.10" width="63.20" height="14.47" rx="1.7"/><rect x="396.40" y="437.10" width="62.45" height="14.47" rx="1.7"/><rect x="459.15" y="437.10" width="56.30" height="14.47" rx="1.7"/><rect x="515.75" y="437.10" width="61.85" height="14.47" rx="1.7"/><rect x="577.90" y="437.10" width="49.55" height="14.47" rx="1.7"/><rect x="627.75" y="437.10" width="62.60" height="14.47" rx="1.7"/><rect x="690.65" y="437.10" width="49.20" height="14.47" rx="1.7"/><rect x="740.15" y="437.10" width="51.70" height="14.47" rx="1.7"/><rect x="72.15" y="451.88" width="103.90" height="14.47" rx="1.7"/><rect x="179.65" y="451.88" width="89.95" height="14.47" rx="1.7"/><rect x="269.90" y="451.88" width="62.70" height="14.47" rx="1.7"/><rect x="332.90" y="451.88" width="63.20" height="14.47" rx="1.7"/><rect x="396.40" y="451.88" width="62.45" height="14.47" rx="1.7"/><rect x="459.15" y="451.88" width="56.30" height="14.47" rx="1.7"/><rect x="515.75" y="451.88" width="61.85" height="14.47" rx="1.7"/><rect x="577.90" y="451.88" width="49.55" height="14.47" rx="1.7"/><rect x="627.75" y="451.88" width="62.60" height="14.47" rx="1.7"/><rect x="690.65" y="451.88" width="49.20" height="14.47" rx="1.7"/><rect x="740.15" y="451.88" width="51.70" height="14.47" rx="1.7"/><rect x="72.15" y="466.65" width="103.90" height="14.47" rx="1.7"/><rect x="179.65" y="466.65" width="89.95" height="14.47" rx="1.7"/><rect x="269.90" y="466.65" width="62.70" height="14.47" rx="1.7"/><rect x="332.90" y="466.65" width="63.20" height="14.47" rx="1.7"/><rect x="396.40" y="466.65" width="62.45" height="14.47" rx="1.7"/><rect x="459.15" y="466.65" width="56.30" height="14.47" rx="1.7"/><rect x="515.75" y="466.65" width="61.85" height="14.47" rx="1.7"/><rect x="577.90" y="466.65" width="49.55" height="14.47" rx="1.7"/><rect x="627.75" y="466.65" width="62.60" height="14.47" rx="1.7"/><rect x="690.65" y="466.65" width="49.20" height="14.47" rx="1.7"/><rect x="740.15" y="466.65" width="51.70" height="14.47" rx="1.7"/><rect x="72.15" y="481.42" width="103.90" height="14.47" rx="1.7"/><rect x="179.65" y="481.42" width="89.95" height="14.47" rx="1.7"/><rect x="269.90" y="481.42" width="62.70" height="14.47" rx="1.7"/><rect x="332.90" y="481.42" width="63.20" height="14.47" rx="1.7"/><rect x="396.40" y="481.42" width="62.45" height="14.47" rx="1.7"/><rect x="459.15" y="481.42" width="56.30" height="14.47" rx="1.7"/><rect x="515.75" y="481.42" width="61.85" height="14.47" rx="1.7"/><rect x="577.90" y="481.42" width="49.55" height="14.47" rx="1.7"/><rect x="627.75" y="481.42" width="62.60" height="14.47" rx="1.7"/><rect x="690.65" y="481.42" width="49.20" height="14.47" rx="1.7"/><rect x="740.15" y="481.42" width="51.70" height="14.47" rx="1.7"/><rect x="72.15" y="496.20" width="103.90" height="14.47" rx="1.7"/><rect x="179.65" y="496.20" width="89.95" height="14.47" rx="1.7"/><rect x="269.90" y="496.20" width="62.70" height="14.47" rx="1.7"/><rect x="332.90" y="496.20" width="63.20" height="14.47" rx="1.7"/><rect x="396.40" y="496.20" width="62.45" height="14.47" rx="1.7"/><rect x="459.15" y="496.20" width="56.30" height="14.47" rx="1.7"/><rect x="515.75" y="496.20" width="61.85" height="14.47" rx="1.7"/><rect x="577.90" y="496.20" width="49.55" height="14.47" rx="1.7"/><rect x="627.75" y="496.20" width="62.60" height="14.47" rx="1.7"/><rect x="690.65" y="496.20" width="49.20" height="14.47" rx="1.7"/><rect x="740.15" y="496.20" width="51.70" height="14.47" rx="1.7"/><rect x="72.15" y="510.98" width="103.90" height="14.47" rx="1.7"/><rect x="179.65" y="510.98" width="89.95" height="14.47" rx="1.7"/><rect x="269.90" y="510.98" width="62.70" height="14.47" rx="1.7"/><rect x="332.90" y="510.98" width="63.20" height="14.47" rx="1.7"/><rect x="396.40" y="510.98" width="62.45" height="14.47" rx="1.7"/><rect x="459.15" y="510.98" width="56.30" height="14.47" rx="1.7"/><rect x="515.75" y="510.98" width="61.85" height="14.47" rx="1.7"/><rect x="577.90" y="510.98" width="49.55" height="14.47" rx="1.7"/><rect x="627.75" y="510.98" width="62.60" height="14.47" rx="1.7"/><rect x="690.65" y="510.98" width="49.20" height="14.47" rx="1.7"/><rect x="740.15" y="510.98" width="51.70" height="14.47" rx="1.7"/></g></svg>
<div class="r red" style="top:111.90px"><div class="c" style="left:73.6px;width:101.7px">BU2-0000001/000</div><div class="c" style="left:181.2px;width:87.7px;letter-spacing:-0.23px">RUCNI EL.VRTACKA</div><div class="c" style="left:335.0px;width:60.4px">705</div><div class="c" style="left:398.7px;width:59.4px">BE - 28</div><div class="c" style="left:461.6px;width:53.1px">BE - dílna</div><div class="c" style="left:517.5px;width:59.4px">SLAVÍK Karel 9:</div><div class="c" style="left:580.2px;width:46.5px">01.03.1999</div></div>
<div class="r" style="top:126.68px"><div class="c" style="left:73.6px;width:101.7px">BU2-0000001/001</div><div class="c" style="left:181.2px;width:87.7px">BU2 cisrad</div><div class="c" style="left:335.0px;width:60.4px">110</div><div class="c" style="left:398.7px;width:59.4px">K12</div><div class="c" style="left:461.6px;width:53.1px">archiv knihovr</div><div class="c" style="left:517.5px;width:59.4px">DAVIDOVÁ Ivet</div><div class="c" style="left:580.2px;width:46.5px">11.06.2010</div></div>
<div class="r" style="top:141.45px"><div class="c" style="left:73.6px;width:101.7px">BU2-0000002/000</div><div class="c" style="left:181.2px;width:87.7px">BRUSKA EL.STOLNI</div><div class="c" style="left:335.0px;width:60.4px">705</div><div class="c" style="left:398.7px;width:59.4px">BE - dvougaráž</div><div class="c" style="left:461.6px;width:53.1px">BE - dvougaráž</div><div class="c" style="left:517.5px;width:59.4px;letter-spacing:-0.31px">WINTR Jiří 8903</div><div class="c" style="left:580.2px;width:46.5px">01.03.1999</div></div>
<div class="r" style="top:156.23px"><div class="c" style="left:73.6px;width:101.7px">BU2-0000003/000</div><div class="c" style="left:181.2px;width:87.7px">CIVKA S KABELEM</div><div class="c" style="left:335.0px;width:60.4px">705</div><div class="c" style="left:398.7px;width:59.4px">BE - dvougaráž</div><div class="c" style="left:461.6px;width:53.1px">BE - dvougaráž</div><div class="c" style="left:517.5px;width:59.4px;letter-spacing:-0.31px">WINTR Jiří 8903</div><div class="c" style="left:580.2px;width:46.5px">01.04.1999</div></div>
<div class="r" style="top:171.00px"><div class="c" style="left:73.6px;width:101.7px">BU2-0000004/000</div><div class="c" style="left:181.2px;width:87.7px">štafle 12 stupňů</div><div class="c" style="left:335.0px;width:60.4px">705</div><div class="c" style="left:398.7px;width:59.4px">BE - dvougaráž</div><div class="c" style="left:461.6px;width:53.1px">BE - dvougaráž</div><div class="c" style="left:517.5px;width:59.4px;letter-spacing:-0.31px">WINTR Jiří 8903</div><div class="c" style="left:580.2px;width:46.5px">01.04.1999</div></div>
<div class="r" style="top:185.78px"><div class="c" style="left:73.6px;width:101.7px">BU2-0000009/000</div><div class="c" style="left:181.2px;width:87.7px">SKRINKA AGATA C.3</div><div class="c" style="left:335.0px;width:60.4px">705</div><div class="c" style="left:398.7px;width:59.4px">BE - 24</div><div class="c" style="left:461.6px;width:53.1px">BE - kancelář</div><div class="c" style="left:517.5px;width:59.4px;letter-spacing:-0.31px">WINTR Jiří 8903</div><div class="c" style="left:580.2px;width:46.5px">01.05.1987</div></div>
<div class="r" style="top:200.55px"><div class="c" style="left:73.6px;width:101.7px">BU2-0000010/000</div><div class="c" style="left:181.2px;width:87.7px">SKRINKA AGATA C.4</div><div class="c" style="left:335.0px;width:60.4px">705</div><div class="c" style="left:398.7px;width:59.4px">BE - 24</div><div class="c" style="left:461.6px;width:53.1px">BE - kancelář</div><div class="c" style="left:517.5px;width:59.4px;letter-spacing:-0.31px">WINTR Jiří 8903</div><div class="c" style="left:580.2px;width:46.5px">01.05.1987</div></div>
<div class="r" style="top:215.32px"><div class="c" style="left:73.6px;width:101.7px">BU2-0000011/000</div><div class="c" style="left:181.2px;width:87.7px">SKRINKA AGATA C.6</div><div class="c" style="left:335.0px;width:60.4px">705</div><div class="c" style="left:398.7px;width:59.4px">BE - 24</div><div class="c" style="left:461.6px;width:53.1px">BE - kancelář</div><div class="c" style="left:517.5px;width:59.4px;letter-spacing:-0.31px">WINTR Jiří 8903</div><div class="c" style="left:580.2px;width:46.5px">01.05.1987</div></div>
<div class="r" style="top:230.10px"><div class="c" style="left:73.6px;width:101.7px">BU2-0000012/000</div><div class="c" style="left:181.2px;width:87.7px">SKRINKA AGATA C.6</div><div class="c" style="left:335.0px;width:60.4px">705</div><div class="c" style="left:398.7px;width:59.4px">BE - 24</div><div class="c" style="left:461.6px;width:53.1px">BE - kancelář</div><div class="c" style="left:517.5px;width:59.4px;letter-spacing:-0.31px">WINTR Jiří 8903</div><div class="c" style="left:580.2px;width:46.5px">01.05.1987</div></div>
<div class="r" style="top:244.88px"><div class="c" style="left:73.6px;width:101.7px">BU2-0000013/000</div><div class="c" style="left:181.2px;width:87.7px">SKRINKA AGATA C.8</div><div class="c" style="left:335.0px;width:60.4px">705</div><div class="c" style="left:398.7px;width:59.4px">BE - 24</div><div class="c" style="left:461.6px;width:53.1px">BE - kancelář</div><div class="c" style="left:517.5px;width:59.4px;letter-spacing:-0.31px">WINTR Jiří 8903</div><div class="c" style="left:580.2px;width:46.5px">01.05.1987</div></div>
<div class="r" style="top:259.65px"><div class="c" style="left:73.6px;width:101.7px">BU2-0000014/000</div><div class="c" style="left:181.2px;width:87.7px">SKRINKA AGATA C.8</div><div class="c" style="left:335.0px;width:60.4px">705</div><div class="c" style="left:398.7px;width:59.4px">BE - 24</div><div class="c" style="left:461.6px;width:53.1px">BE - kancelář</div><div class="c" style="left:517.5px;width:59.4px;letter-spacing:-0.31px">WINTR Jiří 8903</div><div class="c" style="left:580.2px;width:46.5px">01.05.1987</div></div>
<div class="r" style="top:274.43px"><div class="c" style="left:73.6px;width:101.7px">BU2-0000015/000</div><div class="c" style="left:181.2px;width:87.7px">SKRINKA AGATA C.8</div><div class="c" style="left:335.0px;width:60.4px">705</div><div class="c" style="left:398.7px;width:59.4px">BE - 24</div><div class="c" style="left:461.6px;width:53.1px">BE - kancelář</div><div class="c" style="left:517.5px;width:59.4px;letter-spacing:-0.31px">WINTR Jiří 8903</div><div class="c" style="left:580.2px;width:46.5px">01.05.1987</div></div>
<div class="r" style="top:289.20px"><div class="c" style="left:73.6px;width:101.7px">BU2-0000016/000<i class="g"></i></div><div class="c" style="left:181.2px;width:87.7px">SKRINKA AGATA C.8<i class="g"></i></div><div class="c" style="left:335.0px;width:60.4px">705<i class="g"></i></div><div class="c" style="left:398.7px;width:59.4px">BE - 24<i class="g"></i></div><div class="c" style="left:461.6px;width:53.1px">BE - kancelář<i class="g"></i></div><div class="c" style="left:517.5px;width:59.4px;letter-spacing:-0.31px">WINTR Jiří 8903<i class="g"></i></div><div class="c" style="left:580.2px;width:46.5px">01.05.1987<i class="g"></i></div></div>
<div class="r" style="top:303.98px"><div class="c" style="left:73.6px;width:101.7px">BU2-0000017/000</div><div class="c" style="left:181.2px;width:87.7px">SKRINKA AGATA C.8</div><div class="c" style="left:335.0px;width:60.4px">705</div><div class="c" style="left:398.7px;width:59.4px">BE - 24</div><div class="c" style="left:461.6px;width:53.1px">BE - kancelář</div><div class="c" style="left:517.5px;width:59.4px;letter-spacing:-0.31px">WINTR Jiří 8903</div><div class="c" style="left:580.2px;width:46.5px">01.05.1987</div></div>
<div class="r" style="top:318.75px"><div class="c" style="left:73.6px;width:101.7px">BU2-0000018/000</div><div class="c" style="left:181.2px;width:87.7px">SKRINKA AGATA C.8</div><div class="c" style="left:335.0px;width:60.4px">705</div><div class="c" style="left:398.7px;width:59.4px">BE - 24</div><div class="c" style="left:461.6px;width:53.1px">BE - kancelář</div><div class="c" style="left:517.5px;width:59.4px;letter-spacing:-0.31px">WINTR Jiří 8903</div><div class="c" style="left:580.2px;width:46.5px">01.05.1987</div></div>
<div class="r" style="top:333.52px"><div class="c" style="left:73.6px;width:101.7px">BU2-0000019/000</div><div class="c" style="left:181.2px;width:87.7px">SKRINKA AGATA C.8</div><div class="c" style="left:335.0px;width:60.4px">705</div><div class="c" style="left:398.7px;width:59.4px">BE - 24</div><div class="c" style="left:461.6px;width:53.1px">BE - kancelář</div><div class="c" style="left:517.5px;width:59.4px">NOVÁK Jan Doc</div><div class="c" style="left:580.2px;width:46.5px">01.05.1987</div></div>
<div class="r" style="top:348.30px"><div class="c" style="left:73.6px;width:101.7px">BU2-0000020/000</div><div class="c" style="left:181.2px;width:87.7px;letter-spacing:-0.3px">PSACI STUL OBOUSTR</div><div class="c" style="left:335.0px;width:60.4px">705</div><div class="c" style="left:398.7px;width:59.4px">BE - 14</div><div class="c" style="left:461.6px;width:53.1px">BE - sklad</div><div class="c" style="left:517.5px;width:59.4px;letter-spacing:-0.31px">WINTR Jiří 8903</div><div class="c" style="left:580.2px;width:46.5px">01.05.1987</div></div>
<div class="r" style="top:363.08px"><div class="c" style="left:73.6px;width:101.7px">BU2-0000021/000</div><div class="c" style="left:181.2px;width:87.7px;letter-spacing:-0.3px">PSACI STUL OBOUSTR</div><div class="c" style="left:335.0px;width:60.4px">705</div><div class="c" style="left:398.7px;width:59.4px">BE - 14</div><div class="c" style="left:461.6px;width:53.1px">BE - sklad</div><div class="c" style="left:517.5px;width:59.4px;letter-spacing:-0.31px">WINTR Jiří 8903</div><div class="c" style="left:580.2px;width:46.5px">01.05.1987</div></div>
<div class="r" style="top:377.85px"><div class="c" style="left:73.6px;width:101.7px">BU2-0000022/000</div><div class="c" style="left:181.2px;width:87.7px;letter-spacing:-0.25px">ZIDLE NA KOLECKACH</div><div class="c" style="left:335.0px;width:60.4px">705</div><div class="c" style="left:398.7px;width:59.4px">BE - 14</div><div class="c" style="left:461.6px;width:53.1px">BE - sklad</div><div class="c" style="left:517.5px;width:59.4px;letter-spacing:-0.31px">WINTR Jiří 8903</div><div class="c" style="left:580.2px;width:46.5px">01.12.1991</div></div>
<div class="r" style="top:392.62px"><div class="c" style="left:73.6px;width:101.7px">BU2-0000025/000</div><div class="c" style="left:181.2px;width:87.7px;letter-spacing:-0.3px">KANCEL.ZIDLE MANTO</div><div class="c" style="left:335.0px;width:60.4px">705</div><div class="c" style="left:398.7px;width:59.4px">BE - 24</div><div class="c" style="left:461.6px;width:53.1px">BE - kancelář</div><div class="c" style="left:517.5px;width:59.4px;letter-spacing:-0.31px">WINTR Jiří 8903</div><div class="c" style="left:580.2px;width:46.5px">01.06.1999</div></div>
<div class="r" style="top:407.40px"><div class="c" style="left:73.6px;width:101.7px">BU2-0000026/000</div><div class="c" style="left:181.2px;width:87.7px;letter-spacing:-0.3px">KANCEL.ZIDLE MANTO</div><div class="c" style="left:335.0px;width:60.4px">705</div><div class="c" style="left:398.7px;width:59.4px">BE - 24</div><div class="c" style="left:461.6px;width:53.1px">BE - kancelář</div><div class="c" style="left:517.5px;width:59.4px;letter-spacing:-0.31px">WINTR Jiří 8903</div><div class="c" style="left:580.2px;width:46.5px">01.06.1999</div></div>
<div class="r" style="top:422.18px"><div class="c" style="left:73.6px;width:101.7px">BU2-0000027/000</div><div class="c" style="left:181.2px;width:87.7px">postřikovač</div><div class="c" style="left:335.0px;width:60.4px">705</div><div class="c" style="left:398.7px;width:59.4px">BE - dvougaráž</div><div class="c" style="left:461.6px;width:53.1px">BE - dvougaráž</div><div class="c" style="left:517.5px;width:59.4px;letter-spacing:-0.31px">WINTR Jiří 8903</div><div class="c" style="left:580.2px;width:46.5px">01.09.1999</div></div>
<div class="r" style="top:436.95px"><div class="c" style="left:73.6px;width:101.7px">BU2-0000029/000</div><div class="c" style="left:181.2px;width:87.7px;letter-spacing:-0.3px">TEPLOVZDUSNY VENT</div><div class="c" style="left:335.0px;width:60.4px">705</div><div class="c" style="left:398.7px;width:59.4px">BE - 24</div><div class="c" style="left:461.6px;width:53.1px">BE - kancelář</div><div class="c" style="left:517.5px;width:59.4px;letter-spacing:-0.31px">WINTR Jiří 8903</div><div class="c" style="left:580.2px;width:46.5px">01.10.1999</div></div>
<div class="r" style="top:451.73px"><div class="c" style="left:73.6px;width:101.7px">BU2-0000049/000</div><div class="c" style="left:181.2px;width:87.7px;letter-spacing:-0.2px">AUT.PRIVES ATP 247</div><div class="c" style="left:335.0px;width:60.4px">705</div><div class="c" style="left:398.7px;width:59.4px">BE - 28</div><div class="c" style="left:461.6px;width:53.1px">BE - dílna</div><div class="c" style="left:517.5px;width:59.4px">SLAVÍK Karel 9:</div><div class="c" style="left:580.2px;width:46.5px">01.01.1901</div></div>
<div class="r" style="top:466.50px"><div class="c" style="left:73.6px;width:101.7px">BU2-0000059/000</div><div class="c" style="left:181.2px;width:87.7px">válenda</div><div class="c" style="left:335.0px;width:60.4px">705</div><div class="c" style="left:398.7px;width:59.4px">BE - 8</div><div class="c" style="left:461.6px;width:53.1px">BE - ubytovac</div><div class="c" style="left:517.5px;width:59.4px;letter-spacing:-0.31px">WINTR Jiří 8903</div><div class="c" style="left:580.2px;width:46.5px">25.04.2000</div></div>
<div class="r" style="top:481.27px"><div class="c" style="left:73.6px;width:101.7px">BU2-0000060/000</div><div class="c" style="left:181.2px;width:87.7px">válenda</div><div class="c" style="left:335.0px;width:60.4px">705</div><div class="c" style="left:398.7px;width:59.4px">BE - 8</div><div class="c" style="left:461.6px;width:53.1px">BE - ubytovac</div><div class="c" style="left:517.5px;width:59.4px;letter-spacing:-0.31px">WINTR Jiří 8903</div><div class="c" style="left:580.2px;width:46.5px">25.04.2000</div></div>
<div class="r" style="top:496.05px"><div class="c" style="left:73.6px;width:101.7px">BU2-0000061/000</div><div class="c" style="left:181.2px;width:87.7px">válenda</div><div class="c" style="left:335.0px;width:60.4px">705</div><div class="c" style="left:398.7px;width:59.4px">BE - 9</div><div class="c" style="left:461.6px;width:53.1px">BE - ubytovac</div><div class="c" style="left:517.5px;width:59.4px;letter-spacing:-0.31px">WINTR Jiří 8903</div><div class="c" style="left:580.2px;width:46.5px">25.04.2000</div></div>
<div class="r" style="top:510.83px"><div class="c" style="left:73.6px;width:101.7px">BU2-0000062/000</div><div class="c" style="left:181.2px;width:87.7px">válenda</div><div class="c" style="left:335.0px;width:60.4px">705</div><div class="c" style="left:398.7px;width:59.4px">BE - 9</div><div class="c" style="left:461.6px;width:53.1px">BE - ubytovac</div><div class="c" style="left:517.5px;width:59.4px;letter-spacing:-0.31px">WINTR Jiří 8903</div><div class="c" style="left:580.2px;width:46.5px">25.04.2000</div></div>
</div>

<div id="vtrack" class="abs"></div>
<div class="abs sbtn" style="left:46.3px;top:110.3px;width:12.4px;height:12.4px"></div>
<svg class="abs" style="left:46.3px;top:110.3px" width="13" height="13" viewBox="0 0 13 13"><path d="M2.8 8 L6.2 4.2 L9.6 8Z" fill="#6f84a8"/></svg>
<div class="abs sbtn" style="left:47px;top:514.8px;border-radius:2.5px 2.5px 5px 5px"></div>
<svg class="abs" style="left:47px;top:514.8px" width="12" height="12" viewBox="0 0 12 12"><path d="M3.6 4.6 L5.8 7.2 L8 4.6Z" fill="#6f84a8"/></svg>

<div class="rad" style="top:529px;background:radial-gradient(circle,#223 0,#223 2px,#cfd6e2 2.6px,#f4f4f4 3.4px)"></div>
<div class="rad" style="top:541px"></div>
<div class="rad" style="top:552.6px"></div>
<div class="rlab" style="top:527.6px">vše</div>
<div class="rlab" style="top:539.4px">zařazené</div>
<div class="rlab" style="top:550.8px">vyřazené</div>
<div id="cnt" class="abs"></div>
<div id="zaz" class="abs">záznamů</div>
<div id="hs" class="abs"></div>
<div id="hsthumb" class="abs"></div>
<div class="abs" style="left:179.5px;top:548px;width:11px;height:10.8px;background:#e0e2e6;border:0.8px solid #b4c0d4;border-radius:2px"></div>
<svg class="abs" style="left:179.5px;top:548px" width="11" height="11" viewBox="0 0 11 11"><path d="M6.8 3.2 L4 5.4 L6.8 7.6Z" fill="#6f84a8"/></svg>
<div class="abs" style="left:766px;top:548px;width:11.5px;height:10.8px;background:#dfe1e5"></div>
<svg class="abs" style="left:766px;top:548px" width="11" height="11" viewBox="0 0 11 11"><path d="M4.2 3 L7.2 5.4 L4.2 7.8Z" fill="#6f84a8"/></svg>

<div id="status" class="abs"></div>
<div id="stin" class="abs"></div>
<div id="stline" class="abs"></div>
<div class="st" style="left:12px;top:565.8px">Inventární číslo</div>
<div class="st" style="left:9.5px;top:580.1px">Záznam: 1/?</div>
<div class="st" style="left:182px;top:579.3px;font-size:8px;color:#aaa">...</div>
<div class="st" style="left:321.5px;top:579.6px;font-size:9px">&lt;OSC&gt;</div>
<div class="ss" style="left:110px"></div>
<div class="ss" style="left:132px"></div>
<div class="ss" style="left:193.8px"></div>
<div class="ss" style="left:272px"></div>
<div class="ss" style="left:315px"></div>
<div class="ss" style="left:778.5px;top:565px;height:12px"></div>

<div id="dlg" class="abs">
 <div id="dlgt" class="abs"></div>
 <svg class="abs" style="left:36px;top:2.5px" width="248" height="10" viewBox="0 0 248 10"><defs><pattern id="dp" x="0.6" y="0.8" width="6.2" height="6" patternUnits="userSpaceOnUse"><rect x="0" y="0" width="1.35" height="1.35" fill="#c6cede"/><rect x="0.8" y="0.8" width="1.35" height="1.35" fill="#0c1018"/><rect x="3.1" y="3" width="1.35" height="1.35" fill="#c6cede"/><rect x="3.9" y="3.8" width="1.35" height="1.35" fill="#0c1018"/></pattern></defs><rect x="0" y="0" width="246.5" height="9" fill="url(#dp)"/></svg>
 <div id="dlgname" class="abs">Forms</div>
 <svg class="abs" style="left:285px;top:3px" width="10" height="10" viewBox="0 0 10 10"><path d="M2.4 1.8 L8.4 7.8 M8.4 1.8 L2.4 7.8" stroke="#f4f6fa" stroke-width="1.5"/></svg>
 <svg class="abs" style="left:20px;top:34px" width="40" height="36" viewBox="20 34 40 36"><polygon points="28.4,47.2 46.2,41.3 52.2,57.6 33.6,63.8" fill="#30343c"/><polygon points="27.7,46.8 45.5,40.8 51.2,56.8 32.8,62.8" fill="#fdfbb4"/><circle cx="36.2" cy="43.4" r="1.5" fill="#1c2230"/><circle cx="35.8" cy="42.4" r="1.5" fill="#8a92a0"/></svg>
 <div id="dlgmsg" class="abs">Položka stornována z evidence drobného majetku.</div>
 <div id="ok" class="abs"><div class="abs okd" style="top:1.6px"></div><div class="abs okd" style="top:15.6px"></div><div id="oktxt" class="abs"><u>O</u>K</div></div>
</div>

<div class="abs" style="left:0;top:22px;width:2px;height:578px;background:#0c52dc"></div>
<div class="abs" style="left:793.5px;top:21.5px;width:3.5px;height:579px;background:linear-gradient(to right,#0c4cd8,#0a34c4)"></div>
<div class="abs" style="left:0;top:596.5px;width:797px;height:3.5px;background:#0a4cd2"></div>
</div>
</body>
</html>
